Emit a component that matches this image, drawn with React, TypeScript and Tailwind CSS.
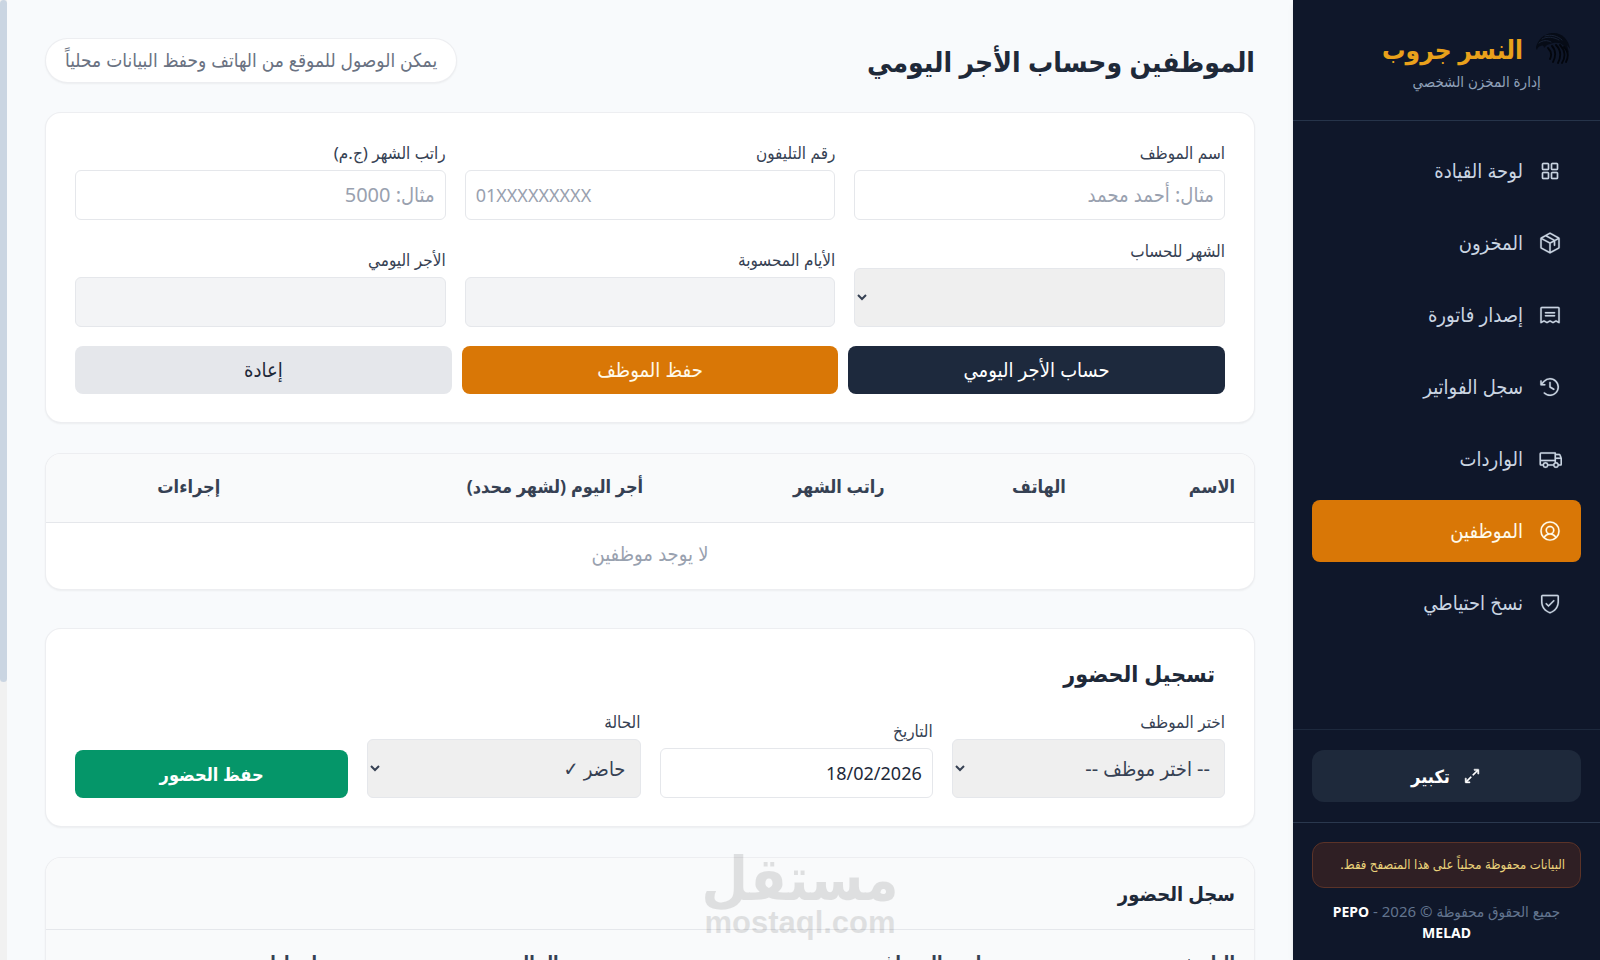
import { useState } from "react";
import type { IconType } from "react-icons";
import {
  PiArrowsOutSimple,
  PiClockCounterClockwise,
  PiPackage,
  PiReceipt,
  PiShieldCheck,
  PiSquaresFour,
  PiTruck,
  PiUserCircle,
} from "react-icons/pi";

interface NavItem {
  id: string;
  label: string;
  icon: IconType;
}

const navItems: NavItem[] = [
  { id: "dashboard", label: "لوحة القيادة", icon: PiSquaresFour },
  { id: "inventory", label: "المخزون", icon: PiPackage },
  { id: "invoice", label: "إصدار فاتورة", icon: PiReceipt },
  { id: "history", label: "سجل الفواتير", icon: PiClockCounterClockwise },
  { id: "imports", label: "الواردات", icon: PiTruck },
  { id: "employees", label: "الموظفين", icon: PiUserCircle },
  { id: "backup", label: "نسخ احتياطي", icon: PiShieldCheck },
];

const card = "rounded-2xl border border-gray-200/70 bg-white shadow-xs";
const labelClass = "mb-[5px] block text-[17px] leading-6 text-gray-700";
const inputClass =
  "block h-[50px] w-full rounded-md border border-gray-200 bg-white px-[10px] text-lg text-gray-800 placeholder:text-gray-400";
const readOnlyClass = "block h-[50px] w-full rounded-md border border-gray-200 bg-gray-100 px-[10px] text-lg";
const selectClass =
  "block h-[59px] w-full rounded-md border border-gray-200 bg-[#efefef] px-[10px] text-xl text-gray-700";
const thClass = "px-[19px] pt-0 pb-1 text-right text-lg font-bold";

function EagleLogo() {
  return (
    <svg viewBox="0 0 36 36" className="size-9" fill="none" strokeLinecap="round">
      <path
        d="M1 16C3 9 8 3 17 2c9-1 17 6 18 16l-3-4 2 8-4-6c-3-4-7-5-12-4l-6 2-3 3c0-2-1-3-3-2-2 0-3 1-4 4-1-1-1-2-1-3Z"
        fill="#060b16"
      />
      <path d="M4 12c4-3 8-3 12-1M7 8c5-3 12-2 17 1M10 5c6-2 13 0 17 4" stroke="#182236" />
      <path
        d="M17 15c4 4 4 11 1 16M21 14c5 5 5 12 2 18M25 14c5 5 6 12 2 18M29 16c4 4 5 9 2 15M13 17c3 3 4 7 2 11"
        stroke="#03060d"
        strokeWidth="1.8"
      />
    </svg>
  );
}

function Sidebar() {
  const [active, setActive] = useState("employees");

  return (
    <aside className="z-10 flex w-[307px] shrink-0 flex-col bg-[#0f172a] shadow-md">
      <div className="flex h-[121px] border-b border-slate-700/70 px-[29px] pt-[29px]">
        <div className="flex flex-col items-center">
          <div className="flex items-center gap-3">
            <EagleLogo />
            <h1 className="text-[26px] leading-10 font-bold text-[#e9a11b]">النسر جروب</h1>
          </div>
          <p className="text-[15px] leading-6 text-slate-400">إدارة المخزن الشخصي</p>
        </div>
      </div>

      <nav className="flex flex-1 flex-col gap-[10px] p-[19px]">
        {navItems.map(({ id, label, icon: Icon }) => (
          <button
            key={id}
            onClick={() => setActive(id)}
            className={
              "flex h-[62px] items-center gap-[15px] rounded-lg px-[19px] text-xl " +
              (active === id ? "bg-[#d97706] text-amber-50" : "text-slate-300 hover:bg-slate-800")
            }
          >
            <Icon className="size-6" strokeWidth={2} />
            <span>{label}</span>
          </button>
        ))}
      </nav>

      <div className="border-t border-slate-800 px-[19px] py-5">
        <button className="flex h-[52px] w-full items-center justify-center gap-3 rounded-xl bg-[#1e293b] text-lg font-bold text-white">
          <PiArrowsOutSimple className="size-5" strokeWidth={6} />
          تكبير
        </button>
      </div>

      <div className="border-t border-slate-700/80 px-[19px] pt-[19px] pb-[17px]">
        <p className="flex h-[46px] items-center rounded-xl border border-[#5b3328] bg-[#2f1f24] px-[15px] text-[13px] whitespace-nowrap text-[#ead27a]">
          البيانات محفوظة محلياً على هذا المتصفح فقط.
        </p>
        <p className="mt-[13px] px-3 text-center text-[15px] leading-5 text-slate-500">
          جميع الحقوق محفوظة © 2026 - <strong className="text-sm text-white">PEPO MELAD</strong>
        </p>
      </div>
    </aside>
  );
}

function EmployeeForm() {
  return (
    <form className={card + " px-[29px] py-[28px]"} onSubmit={(e) => e.preventDefault()}>
      <div className="grid grid-cols-3 items-end gap-[19px]">
        <div>
          <label htmlFor="emp-name" className={labelClass}>اسم الموظف</label>
          <input id="emp-name" type="text" placeholder="مثال: أحمد محمد" className={inputClass + " placeholder:text-xl"} />
        </div>
        <div>
          <label htmlFor="emp-phone" className={labelClass}>رقم التليفون</label>
          <input id="emp-phone" type="tel" dir="ltr" placeholder="01XXXXXXXXX" className={inputClass} />
        </div>
        <div>
          <label htmlFor="emp-salary" className={labelClass}>راتب الشهر (ج.م)</label>
          <input id="emp-salary" type="text" inputMode="numeric" placeholder="مثال: 5000" className={inputClass + " placeholder:text-xl"} />
        </div>
        <div>
          <label htmlFor="emp-month" className={labelClass}>الشهر للحساب</label>
          <select id="emp-month" className={selectClass}></select>
        </div>
        <div>
          <label htmlFor="emp-days" className={labelClass}>الأيام المحسوبة</label>
          <input id="emp-days" type="text" readOnly className={readOnlyClass} />
        </div>
        <div>
          <label htmlFor="emp-daily" className={labelClass}>الأجر اليومي</label>
          <input id="emp-daily" type="text" readOnly className={readOnlyClass} />
        </div>
      </div>
      <div className="mt-[19px] grid grid-cols-3 gap-[10px]">
        <button type="button" className="h-12 rounded-lg bg-slate-800 text-xl text-white">حساب الأجر اليومي</button>
        <button type="submit" className="h-12 rounded-lg bg-[#d97706] text-xl text-amber-50">حفظ الموظف</button>
        <button type="reset" className="h-12 rounded-lg bg-gray-200 text-xl text-gray-800">إعادة</button>
      </div>
    </form>
  );
}

function EmployeeTable() {
  return (
    <div className={card + " mt-[30px] overflow-hidden"}>
      <table className="w-full table-fixed">
        <colgroup>
          <col className="w-[14%]" />
          <col className="w-[15%]" />
          <col className="w-[20%]" />
          <col className="w-[35%]" />
          <col className="w-[16%]" />
        </colgroup>
        <thead>
          <tr className="h-[68px] border-b border-gray-200 bg-gray-50 text-gray-700">
            <th className={thClass}>الاسم</th>
            <th className={thClass}>الهاتف</th>
            <th className={thClass}>راتب الشهر</th>
            <th className={thClass}>أجر اليوم (لشهر محدد)</th>
            <th className={thClass}>إجراءات</th>
          </tr>
        </thead>
        <tbody>
          <tr className="h-[67px]">
            <td colSpan={5} className="pb-1 text-center text-xl text-gray-400">لا يوجد موظفين</td>
          </tr>
        </tbody>
      </table>
    </div>
  );
}

function AttendanceForm() {
  const [date, setDate] = useState("18/02/2026");

  return (
    <form className={card + " mt-[38px] px-[29px] py-[28px]"} onSubmit={(e) => e.preventDefault()}>
      <h3 className="mb-[21px] px-[10px] text-[23px] leading-8 font-bold text-gray-800">تسجيل الحضور</h3>
      <div className="grid grid-cols-4 items-end gap-[19px]">
        <div>
          <label htmlFor="att-emp" className={labelClass}>اختر الموظف</label>
          <select id="att-emp" className={selectClass}>
            <option>-- اختر موظف --</option>
          </select>
        </div>
        <div>
          <label htmlFor="att-date" className={labelClass}>التاريخ</label>
          <input
            id="att-date"
            type="text"
            dir="ltr"
            value={date}
            onChange={(e) => setDate(e.target.value)}
            className={inputClass + " text-right"}
          />
        </div>
        <div>
          <label htmlFor="att-status" className={labelClass}>الحالة</label>
          <select id="att-status" className={selectClass}>
            <option>حاضر ✓</option>
            <option>غائب ✗</option>
          </select>
        </div>
        <button type="submit" className="h-12 rounded-lg bg-[#059669] text-lg font-bold text-white">حفظ الحضور</button>
      </div>
    </form>
  );
}

function AttendanceLog() {
  return (
    <div className={card + " mt-[30px] overflow-hidden"}>
      <div className="flex h-[72px] items-center border-b border-gray-200 bg-gray-50 px-[19px]">
        <h3 className="text-xl font-bold text-gray-800">سجل الحضور</h3>
      </div>
      <table className="w-full table-fixed">
        <colgroup>
          <col className="w-[21%]" />
          <col className="w-[35%]" />
          <col className="w-[20%]" />
          <col className="w-[24%]" />
        </colgroup>
        <thead>
          <tr className="h-[68px] border-b border-gray-200 bg-gray-50 text-gray-700">
            <th className={thClass}>التاريخ</th>
            <th className={thClass}>اسم الموظف</th>
            <th className={thClass}>الحالة</th>
            <th className={thClass}>إجراءات</th>
          </tr>
        </thead>
        <tbody>
          <tr className="h-[67px]">
            <td colSpan={4} className="pb-1 text-center text-xl text-gray-400">لا يوجد سجلات</td>
          </tr>
        </tbody>
      </table>
    </div>
  );
}

export default function App() {
  return (
    <div
      dir="rtl"
      className="relative flex h-screen overflow-hidden bg-[#f8fafc] font-['Noto_Sans','DejaVu_Sans_Condensed','DejaVu_Sans',sans-serif]"
    >
      <Sidebar />
      <main className="min-w-0 flex-1 overflow-y-auto p-[38px] [scrollbar-width:none]">
        <header className="mb-[29px] flex items-center justify-between">
          <h2 className="text-[28px] leading-10 font-bold text-gray-800">الموظفين وحساب الأجر اليومي</h2>
          <p className="flex h-[45px] items-center rounded-full border border-gray-200/70 bg-white px-[19px] text-[19px] text-gray-500 shadow-xs">
            يمكن الوصول للموقع من الهاتف وحفظ البيانات محلياً
          </p>
        </header>
        <EmployeeForm />
        <EmployeeTable />
        <AttendanceForm />
        <AttendanceLog />
      </main>
      <div className="w-[7px] shrink-0 bg-[#f1f1f1]">
        <div className="h-[71%] rounded bg-slate-300"></div>
      </div>

      {/* watermark */}
      <div className="pointer-events-none absolute bottom-[19px] left-[44%] flex w-[192px] flex-col items-center font-bold text-black opacity-10">
        <span className="text-[60px] leading-[56px]">مستقل</span>
        <span dir="ltr" className="font-['Liberation_Sans'] text-[31px] leading-[36px]">mostaql.com</span>
      </div>
    </div>
  );
}
